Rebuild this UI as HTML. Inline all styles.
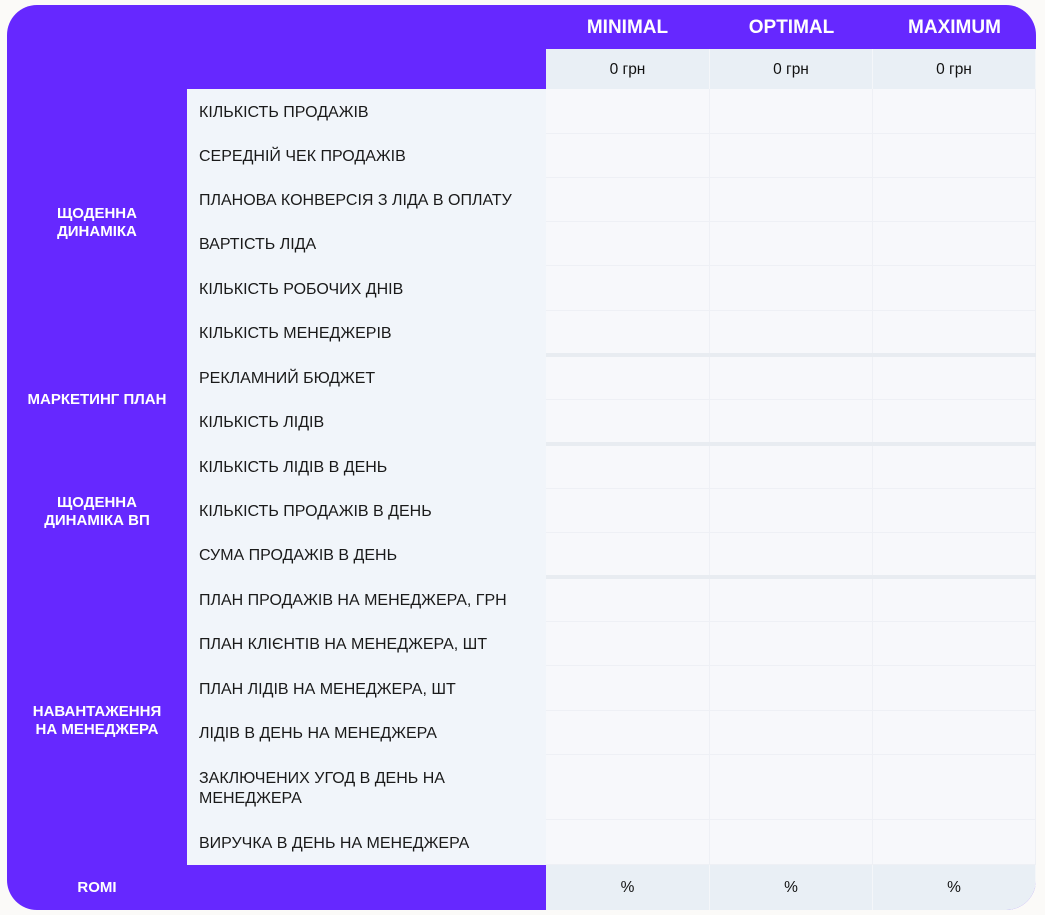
<!DOCTYPE html>
<html><head><meta charset="utf-8"><style>
*{margin:0;padding:0;box-sizing:border-box}
body{width:1045px;height:915px;background:#fbfaf8;position:relative;overflow:hidden;font-family:"Liberation Sans",sans-serif}
.box{position:absolute;left:7px;top:5px;width:1029px;height:905px;border-radius:30px;overflow:hidden;background:#6628ff}
.a{position:absolute}
.h{color:#fff;font-weight:bold;font-size:19px;text-align:center;top:1px;height:43px;line-height:43px;width:163px}
.c{position:absolute;background:#f7f8fb;border-right:1px solid #eef0f5;border-bottom:1px solid #eef0f5}
.g{position:absolute;background:#e9eff5;text-align:center;font-size:15.5px;color:#111;border-right:1px solid #f4f6f9}
.l{position:absolute;left:180px;width:359px;background:#f1f5fa;font-size:16px;color:#1a1a1a;padding-left:12px;padding-top:2px;display:flex;align-items:center;line-height:20px}
.gl{position:absolute;left:0;width:180px;color:#fff;font-weight:bold;font-size:15px;text-align:center;line-height:18px;transform:translateY(-50%)}
.sep{position:absolute;left:539px;width:490px;height:4px;background:#e8ecf1}
</style></head><body>
<div class="box">
<div class="a h" style="left:539px">MINIMAL</div>
<div class="a h" style="left:703px">OPTIMAL</div>
<div class="a h" style="left:866px">MAXIMUM</div>
<div class="g" style="left:539px;top:44px;width:164px;height:40px;line-height:42px">0 грн</div>
<div class="g" style="left:703px;top:44px;width:163px;height:40px;line-height:42px">0 грн</div>
<div class="g" style="left:866px;top:44px;width:163px;height:40px;line-height:42px">0 грн</div>
<div id="rows"></div>
<div class="g" style="left:539px;top:860px;width:164px;height:45px;line-height:45px">%</div>
<div class="g" style="left:703px;top:860px;width:163px;height:45px;line-height:45px">%</div>
<div class="g" style="left:866px;top:860px;width:163px;height:45px;line-height:45px">%</div>
<div class="gl" style="top:218px">ЩОДЕННА<br>ДИНАМІКА</div>
<div class="gl" style="top:395px">МАРКЕТИНГ ПЛАН</div>
<div class="gl" style="top:507px">ЩОДЕННА<br>ДИНАМІКА ВП</div>
<div class="gl" style="top:716px">НАВАНТАЖЕННЯ<br>НА МЕНЕДЖЕРА</div>
<div class="gl" style="top:883px">ROMI</div>
</div>
<script>
var b=[84,129,173,217,261,306,350,395,439,484,528,572,617,661,706,750,815,860];
var t=["КІЛЬКІСТЬ ПРОДАЖІВ","СЕРЕДНІЙ ЧЕК ПРОДАЖІВ","ПЛАНОВА КОНВЕРСІЯ З ЛІДА В ОПЛАТУ","ВАРТІСТЬ ЛІДА","КІЛЬКІСТЬ РОБОЧИХ ДНІВ","КІЛЬКІСТЬ МЕНЕДЖЕРІВ","РЕКЛАМНИЙ БЮДЖЕТ","КІЛЬКІСТЬ ЛІДІВ","КІЛЬКІСТЬ ЛІДІВ В ДЕНЬ","КІЛЬКІСТЬ ПРОДАЖІВ В ДЕНЬ","СУМА ПРОДАЖІВ В ДЕНЬ","ПЛАН ПРОДАЖІВ НА МЕНЕДЖЕРА, ГРН","ПЛАН КЛІЄНТІВ НА МЕНЕДЖЕРА, ШТ","ПЛАН ЛІДІВ НА МЕНЕДЖЕРА, ШТ","ЛІДІВ В ДЕНЬ НА МЕНЕДЖЕРА","ЗАКЛЮЧЕНИХ УГОД В ДЕНЬ НА<br>МЕНЕДЖЕРА","ВИРУЧКА В ДЕНЬ НА МЕНЕДЖЕРА"];
var h="";
for(var i=0;i<17;i++){var y=b[i],hh=b[i+1]-b[i];
h+='<div class="l" style="top:'+y+'px;height:'+hh+'px">'+t[i]+'</div>';
var xs=[[539,164],[703,163],[866,163]];
for(var j=0;j<3;j++)h+='<div class="c" style="left:'+xs[j][0]+'px;top:'+y+'px;width:'+xs[j][1]+'px;height:'+hh+'px"></div>';}
[348,437,570].forEach(function(y){h+='<div class="sep" style="top:'+y+'px"></div>'});
document.getElementById("rows").innerHTML=h;
</script>
</body></html>
